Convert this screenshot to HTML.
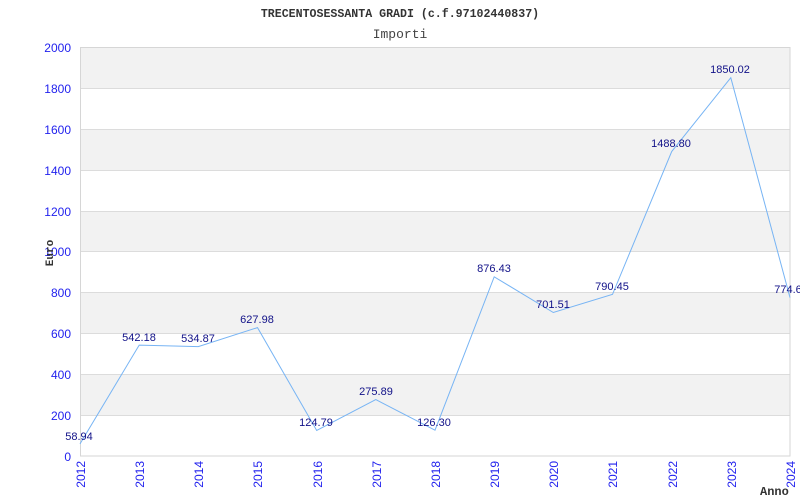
<!DOCTYPE html>
<html><head><meta charset="utf-8"><style>
html,body{margin:0;padding:0;background:#fff;width:800px;height:500px;overflow:hidden}
svg{display:block}
</style></head><body>
<svg width="800" height="500" xmlns="http://www.w3.org/2000/svg">
<rect x="80" y="47" width="710" height="409" fill="#fff"/>
<g fill="#f2f2f2">
<rect x="80" y="47" width="710" height="41"/>
<rect x="80" y="129" width="710" height="41"/>
<rect x="80" y="211" width="710" height="41"/>
<rect x="80" y="292" width="710" height="41"/>
<rect x="80" y="374" width="710" height="41"/>
</g>
<g stroke="#dcdcdc" stroke-width="1">
<line x1="80" y1="88.5" x2="790" y2="88.5"/><line x1="80" y1="129.5" x2="790" y2="129.5"/>
<line x1="80" y1="170.5" x2="790" y2="170.5"/><line x1="80" y1="211.5" x2="790" y2="211.5"/>
<line x1="80" y1="251.5" x2="790" y2="251.5"/><line x1="80" y1="292.5" x2="790" y2="292.5"/>
<line x1="80" y1="333.5" x2="790" y2="333.5"/><line x1="80" y1="374.5" x2="790" y2="374.5"/>
<line x1="80" y1="415.5" x2="790" y2="415.5"/>
</g>
<rect x="80.5" y="47.5" width="709.5" height="408.5" fill="none" stroke="#d6d6d6"/>
<g font-family="Liberation Sans, sans-serif" font-size="12" fill="#2222ee" text-anchor="end">
<text x="71" y="52">2000</text><text x="71" y="93">1800</text><text x="71" y="134">1600</text>
<text x="71" y="175">1400</text><text x="71" y="216">1200</text><text x="71" y="256">1000</text>
<text x="71" y="297">800</text><text x="71" y="338">600</text><text x="71" y="379">400</text>
<text x="71" y="420">200</text><text x="71" y="461">0</text>
</g>
<g font-family="Liberation Sans, sans-serif" font-size="12" fill="#2222ee" text-anchor="end">
<text transform="translate(85,461) rotate(-90)">2012</text>
<text transform="translate(144,461) rotate(-90)">2013</text>
<text transform="translate(203,461) rotate(-90)">2014</text>
<text transform="translate(262,461) rotate(-90)">2015</text>
<text transform="translate(322,461) rotate(-90)">2016</text>
<text transform="translate(381,461) rotate(-90)">2017</text>
<text transform="translate(440,461) rotate(-90)">2018</text>
<text transform="translate(499,461) rotate(-90)">2019</text>
<text transform="translate(558,461) rotate(-90)">2020</text>
<text transform="translate(617,461) rotate(-90)">2021</text>
<text transform="translate(677,461) rotate(-90)">2022</text>
<text transform="translate(736,461) rotate(-90)">2023</text>
<text transform="translate(795,461) rotate(-90)">2024</text>
</g>
<polyline fill="none" stroke="#77b4f4" stroke-width="1" points="80,443.9 139.2,345.1 198.3,346.6 257.5,327.6 316.7,430.5 375.8,399.6 435,430.2 494.2,276.8 553.3,312.5 612.5,294.4 671.7,151.5 730.8,77.7 790,297.6"/>
<g font-family="Liberation Sans, sans-serif" font-size="11" fill="#111188" text-anchor="middle">
<text x="79" y="440">58.94</text><text x="139" y="341">542.18</text><text x="198" y="342">534.87</text>
<text x="257" y="323">627.98</text><text x="316" y="426">124.79</text><text x="376" y="395">275.89</text>
<text x="434" y="426">126.30</text><text x="494" y="272">876.43</text><text x="553" y="308">701.51</text>
<text x="612" y="290">790.45</text><text x="671" y="147">1488.80</text><text x="730" y="73">1850.02</text>
<text x="788" y="293">774.6</text>
</g>
<text x="400" y="17" font-family="Liberation Mono, monospace" font-size="11.6" font-weight="bold" fill="#333" text-anchor="middle">TRECENTOSESSANTA GRADI (c.f.97102440837)</text>
<text x="400" y="38" font-family="Liberation Mono, monospace" font-size="13" fill="#444" text-anchor="middle">Importi</text>
<text transform="translate(53,253) rotate(-90)" font-family="Liberation Mono, monospace" font-size="11" font-weight="bold" fill="#333" text-anchor="middle">Euro</text>
<text x="760" y="495" font-family="Liberation Mono, monospace" font-size="12" font-weight="bold" fill="#333">Anno</text>
</svg>
</body></html>
